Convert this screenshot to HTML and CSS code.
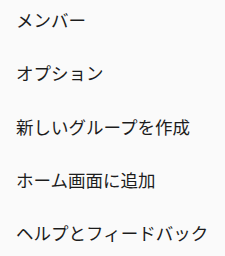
FILE: index.html
```html
<!DOCTYPE html>
<html lang="ja">

<head>
    <meta charset="UTF-8">
    <meta name="viewport" content="width=device-width, initial-scale=1.0">
    <title>メニュー</title>
    <link rel="stylesheet" href="styles.css">
</head>

<body>
    <ul class="menu">
        <li class="menu-item">メンバー</li>
        <li class="menu-item">オプション</li>
        <li class="menu-item">新しいグループを作成</li>
        <li class="menu-item">ホーム画面に追加</li>
        <li class="menu-item">ヘルプとフィードバック</li>
    </ul>
</body>

</html>
```

FILE: styles.css
```css
html,
body {
    margin: 0;
    padding: 0;
    background-color: #fafafa;
}

body {
    font-family: "Noto Sans CJK JP", "Noto Sans", sans-serif;
    color: #1c1c1c;
    width: 225px;
    height: 256px;
    overflow: hidden;
}

.menu {
    list-style: none;
    margin: -7px 0 0 0;
    padding: 0;
}

.menu-item {
    height: 53.25px;
    line-height: 53.25px;
    padding-left: 16px;
    font-size: 17.5px;
    white-space: nowrap;
}
```
